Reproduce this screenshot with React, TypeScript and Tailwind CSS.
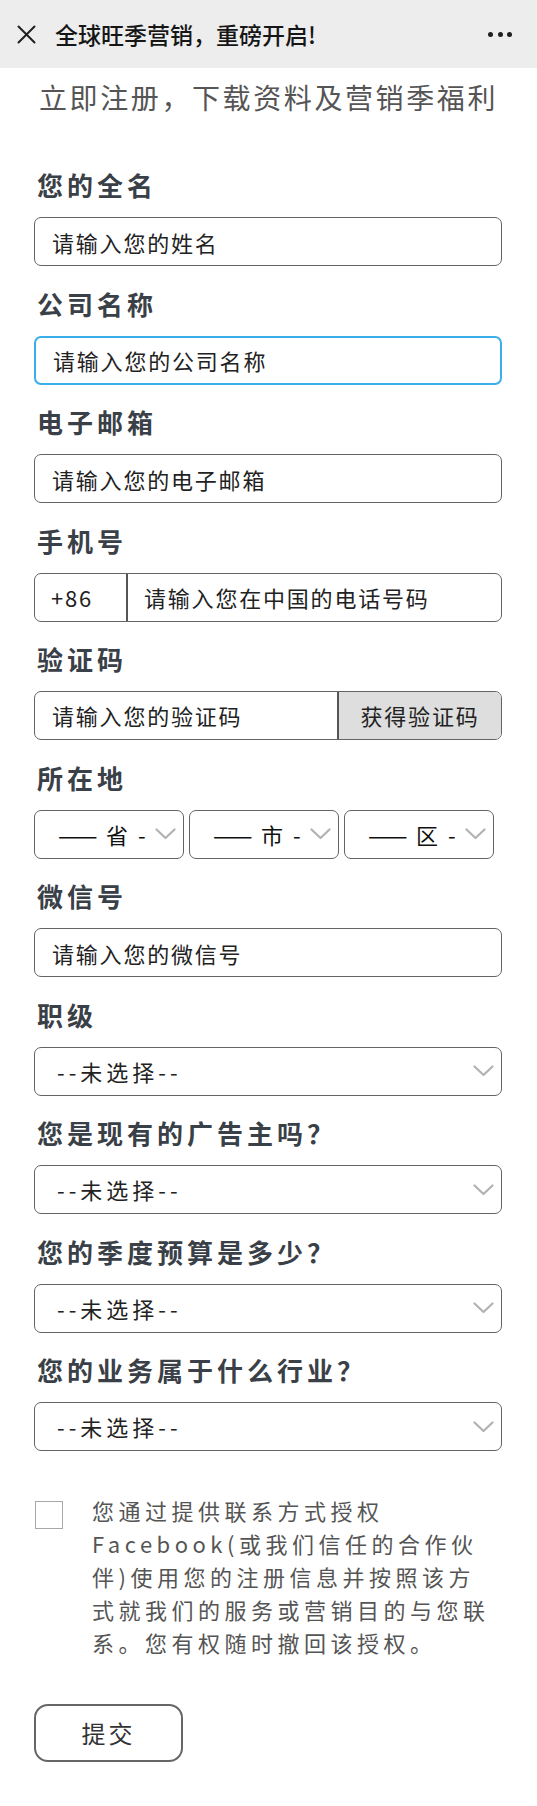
const fontCls = "font-['Noto_Sans_CJK_SC','Noto_Sans',sans-serif]";

function Chevron() {
  return (
    <svg width="21" height="12" viewBox="0 0 21 12" className="shrink-0">
      <polyline points="1.5,1.5 10.5,10 19.5,1.5" fill="none" stroke="#b2b2b2" strokeWidth="2.2" strokeLinecap="round" strokeLinejoin="round" />
    </svg>
  );
}

function Label({ children }: { children: string }) {
  return (
    <div className="h-[36px] leading-[36px] text-[26px] font-bold tracking-[4px] text-[#3a4047] mb-[14px] pl-[3px]">
      {children}
    </div>
  );
}

function TextBox({ placeholder, focused }: { placeholder: string; focused?: boolean }) {
  return (
    <input
      placeholder={placeholder}
      className={`block w-full h-[49px] rounded-[7px] pl-[17px] text-[22px] tracking-[1.8px] text-[#222] placeholder:text-[#222] outline-none bg-white ${
        focused ? "border-2 border-[#3aaee8]" : "border-[1.5px] border-[#646464]"
      }`}
    />
  );
}

function SelectBox({ value }: { value: string }) {
  return (
    <div className="h-[49px] w-full rounded-[7px] border-[1.5px] border-[#646464] flex items-center justify-between pl-[22px] pr-[7px] text-[22px] tracking-[4px] text-[#222]">
      <span>{value}</span>
      <Chevron />
    </div>
  );
}

function Field({ label, children }: { label: string; children: React.ReactNode }) {
  return (
    <div className="mt-[19.5px] first:mt-0">
      <Label>{label}</Label>
      {children}
    </div>
  );
}

export default function App() {
  const regions = ["省", "市", "区"];
  const pickers = ["职级", "您是现有的广告主吗？", "您的季度预算是多少？", "您的业务属于什么行业？"];

  return (
    <div className={`${fontCls} w-[537px] min-h-[1806px] bg-white`}>
      <div className="h-[68px] bg-[#ededed] flex items-center pl-[17px] pr-[25px]">
        <svg width="19" height="19" viewBox="0 0 19 19" className="shrink-0">
          <path d="M1.5 1.5 L17.5 17.5 M17.5 1.5 L1.5 17.5" stroke="#1f1f1f" strokeWidth="2" strokeLinecap="round" />
        </svg>
        <div className="ml-[19px] text-[23px] font-medium text-[#161616] leading-none flex-1">
          全球旺季营销，重磅开启!
        </div>
        <div className="flex items-center gap-[4.5px]">
          <span className="w-[5px] h-[5px] rounded-full bg-[#1f1f1f]" />
          <span className="w-[5px] h-[5px] rounded-full bg-[#1f1f1f]" />
          <span className="w-[5px] h-[5px] rounded-full bg-[#1f1f1f]" />
        </div>
      </div>

      <div className="mt-[9px] h-[40px] leading-[40px] text-center text-[28px] tracking-[2.6px] text-[#555]">
        立即注册，下载资料及营销季福利
      </div>

      <form className="pl-[34px] pr-[35px] mt-[50px]">
        <Field label="您的全名">
          <TextBox placeholder="请输入您的姓名" />
        </Field>
        <Field label="公司名称">
          <TextBox placeholder="请输入您的公司名称" focused />
        </Field>
        <Field label="电子邮箱">
          <TextBox placeholder="请输入您的电子邮箱" />
        </Field>
        <Field label="手机号">
          <div className="h-[49px] flex rounded-[7px] border-[1.5px] border-[#646464] text-[22px] tracking-[1.8px] text-[#222]">
            <div className="w-[93px] flex items-center pl-[16px] border-r-2 border-[#555]">+86</div>
            <input
              placeholder="请输入您在中国的电话号码"
              className="flex-1 min-w-0 pl-[16px] outline-none bg-transparent placeholder:text-[#222]"
            />
          </div>
        </Field>
        <Field label="验证码">
          <div className="h-[49px] flex rounded-[7px] border-[1.5px] border-[#646464] text-[22px] tracking-[1.8px] text-[#222] overflow-hidden">
            <input
              placeholder="请输入您的验证码"
              className="flex-1 min-w-0 pl-[17px] outline-none bg-transparent placeholder:text-[#222]"
            />
            <button type="button" className="w-[164px] border-l-2 border-[#555] bg-[#dedede] text-[22px] tracking-[1.8px] text-[#222]">
              获得验证码
            </button>
          </div>
        </Field>
        <Field label="所在地">
          <div className="flex gap-[5px]">
            {regions.map((r) => (
              <div
                key={r}
                className="w-[150px] h-[49px] rounded-[7px] border-[1.5px] border-[#646464] flex items-center justify-between pl-[23px] pr-[7px] text-[22px] text-[#111]"
              >
                <span className="whitespace-nowrap flex items-center">
                  <span className="inline-block w-[46px]">
                    <span className="inline-block origin-left scale-x-[1.07]">——</span>
                  </span>
                  <span className="ml-[2px]">{r}</span>
                  <span className="ml-[10px]">-</span>
                </span>
                <Chevron />
              </div>
            ))}
          </div>
        </Field>
        <Field label="微信号">
          <TextBox placeholder="请输入您的微信号" />
        </Field>
        {pickers.map((p) => (
          <Field key={p} label={p}>
            <SelectBox value="--未选择--" />
          </Field>
        ))}

        <div className="mt-[43px] flex items-start">
          <div className="ml-[1px] mt-[7px] w-[28px] h-[28px] border-[1.5px] border-[#a8a8a8] shrink-0" />
          <p className="ml-[29px] w-[405px] text-[22px] leading-[33px] tracking-[4.5px] text-[#555]">
            您通过提供联系方式授权Facebook(或我们信任的合作伙伴)使用您的注册信息并按照该方式就我们的服务或营销目的与您联系。您有权随时撤回该授权。
          </p>
        </div>

        <button
          type="button"
          className="mt-[45px] w-[149px] h-[58px] rounded-[14px] border-2 border-[#666] text-[24px] tracking-[3px] text-[#333] bg-white"
        >
          提交
        </button>
      </form>
    </div>
  );
}
